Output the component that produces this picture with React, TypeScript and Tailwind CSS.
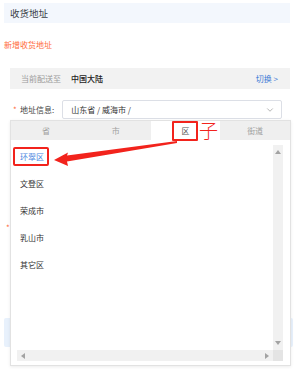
import { ChevronDown } from 'lucide-react';

const districts = ['环翠区', '文登区', '荣成市', '乳山市', '其它区'];
const tabs = ['省', '市', '区', '街道'];

function Tri({ dir }: { dir: 'up' | 'down' | 'left' | 'right' }) {
  const pts = {
    up: '0,4 3,0 6,4',
    down: '0,0 6,0 3,4',
    left: '4,0 4,6 0,3',
    right: '0,0 0,6 4,3',
  }[dir];
  const size = dir === 'up' || dir === 'down' ? { w: 6, h: 4 } : { w: 4, h: 6 };
  return (
    <svg width={size.w} height={size.h} viewBox={`0 0 ${size.w} ${size.h}`}>
      <polygon points={pts} fill="#a3a3a3" />
    </svg>
  );
}

export default function App() {
  return (
    <div className="relative w-[295px] h-[369px] bg-white overflow-hidden font-['Noto_Sans_CJK_SC',sans-serif] text-[8px] leading-[10px] text-[#333]">
      {/* page underneath */}
      <div className="pt-[3px] pl-[4px] pr-[5px]">
        <div className="h-[20px] bg-[#f3f7fd] pl-[6px] flex items-center text-[9.5px] text-[#3a3f48]">
          收货地址
        </div>
      </div>

      <div className="mt-[17px] pl-[4px] text-[#ff6b3d]">新增收货地址</div>

      <div className="mt-[18px] ml-[10px] mr-[5px] h-[21px] bg-[#f2f2f2] flex items-center pl-[11px] pr-[12px]">
        <span className="text-[#9a9a9a]">当前配送至</span>
        <span className="ml-[10px] font-medium text-[#222]">中国大陆</span>
        <span className="ml-auto text-[#3d7ad6]">切换 &gt;</span>
      </div>

      <div className="mt-[11px] flex items-center pl-[13px]">
        <span className="text-[#ff6b3d] w-[7px]">*</span>
        <span className="text-[#444]">地址信息:</span>
        <div className="ml-[8px] w-[220px] h-[19px] border border-[#dcdfe6] rounded-[2px] flex items-center pl-[8px] pr-[6px] text-[#333]">
          <span>山东省 / 威海市 /</span>
          <ChevronDown className="ml-auto" size={10} strokeWidth={1.5} color="#888" />
        </div>
      </div>

      <div className="mt-[104px] pl-[6px] text-[#ff6b3d]">*</div>

      <div className="mt-[85px] ml-[4px] mr-[2px] h-[29px] bg-[#e8f1fc] rounded-[2px]" />

      {/* cascader dropdown */}
      <div className="absolute left-[10px] top-[120px] w-[281px] h-[246px] bg-white border border-[#e2e2e2] flex flex-col shadow-[0_1px_3px_rgba(0,0,0,0.08)]">
        <div className="grid grid-cols-4 h-[19px]">
          {tabs.map((t, i) => (
            <div
              key={t}
              className={
                i === 2
                  ? 'bg-white text-[#555] flex items-center justify-center'
                  : 'bg-[#efefef] text-[#a0a0a0] flex items-center justify-center'
              }
            >
              {t}
            </div>
          ))}
        </div>
        <div className="flex-1 pl-[6px] pr-[7px] pb-[4px] grid grid-cols-[1fr_10px] grid-rows-[1fr_11px]">
          <div className="pt-[3px] pl-[3px]">
            {districts.map((d, i) => (
              <div
                key={d}
                className={i === 0 ? 'h-[27px] flex items-center text-[#4a86e0]' : 'h-[27px] flex items-center text-[#333]'}
              >
                {d}
              </div>
            ))}
          </div>
          <div className="mt-[5px] bg-[#f1f1f1] flex flex-col items-center justify-between py-[5px]">
            <Tri dir="up" />
            <Tri dir="down" />
          </div>
          <div className="bg-[#f1f1f1] flex items-center justify-between px-[4px]">
            <Tri dir="left" />
            <Tri dir="right" />
          </div>
          <div className="bg-[#e4e4e4]" />
        </div>
      </div>

      {/* annotations */}
      <div className="absolute left-[172px] top-[121px] w-[26px] h-[20px] border-2 border-[#f2231c] rounded-[1px]" />
      <div className="absolute left-[13px] top-[147px] w-[36px] h-[19px] border-2 border-[#f2231c] rounded-[2px]" />
      <div className="absolute left-[199px] top-[119px] text-[19px] leading-[22px] text-[#f2231c] font-light">子</div>
      <svg className="absolute left-0 top-0 pointer-events-none" width="295" height="369" viewBox="0 0 295 369">
        <polygon
          points="177,141 67,155.5 68,152.5 54,160 68,166 67,161.5 177,143"
          fill="#f2231c"
        />
      </svg>
    </div>
  );
}
